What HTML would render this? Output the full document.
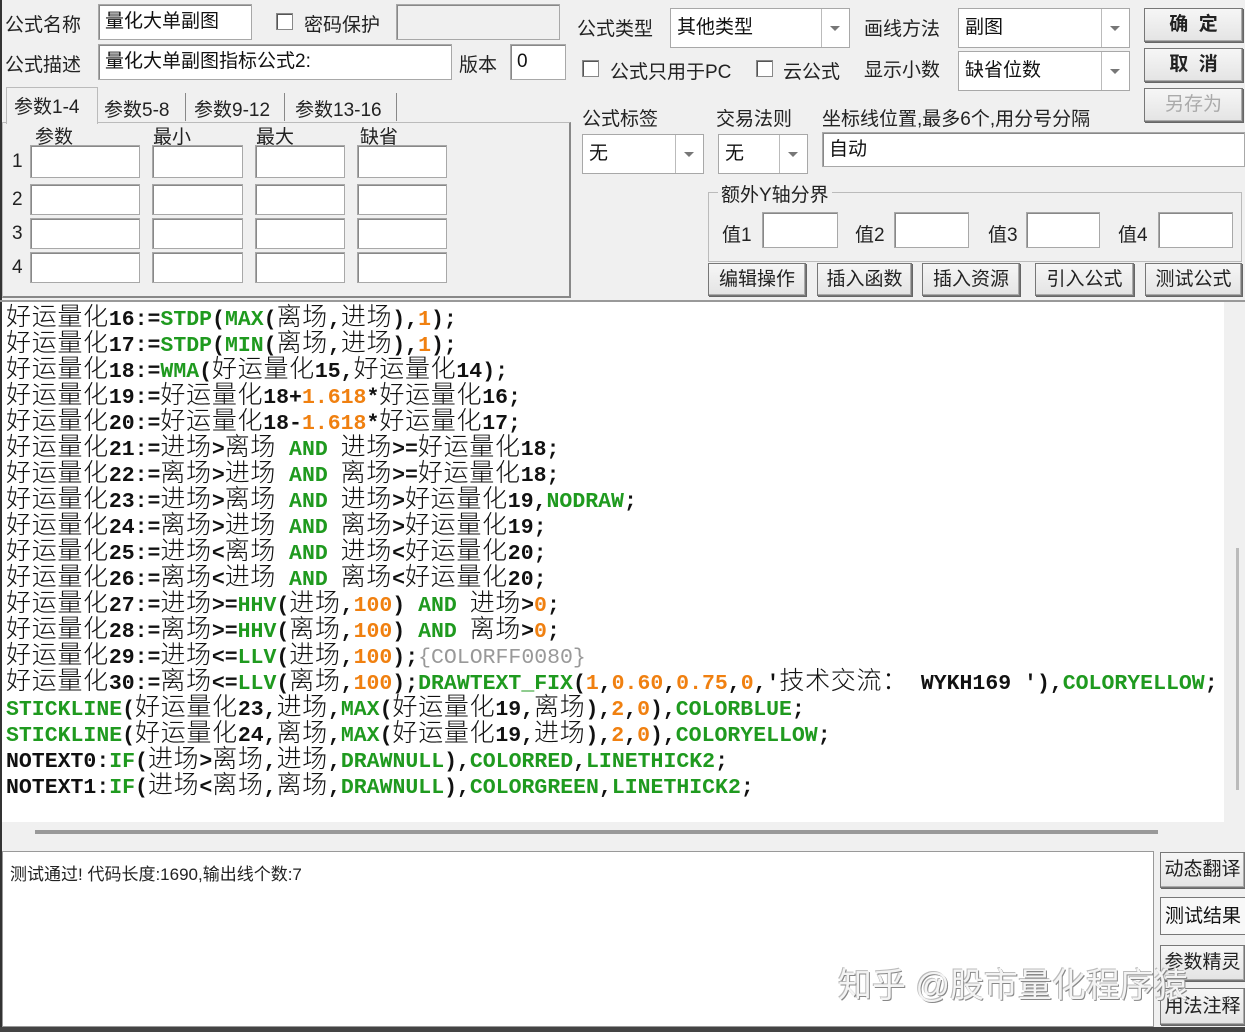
<!DOCTYPE html><html><head><meta charset="utf-8"><style>
*{box-sizing:border-box;margin:0;padding:0}
body{width:1245px;height:1032px;background:#f0f0f0;position:relative;overflow:hidden;font-family:"Liberation Sans","Noto Sans CJK SC",sans-serif;font-size:19px;color:#111}
.a{position:absolute}
.in{position:absolute;background:#fff;border:1px solid #a8a8a8;box-shadow:inset 1px 1px 0 #888;padding:2px 6px;white-space:nowrap;line-height:30px}
.lb{position:absolute;white-space:nowrap;color:#222}
.cb{position:absolute;width:17px;height:17px;background:#fff;border:1px solid #888;box-shadow:inset 1px 1px 0 #555}
.sel{position:absolute;background:#fff;border:1px solid #a8a8a8;padding:4px 6px;line-height:30px;white-space:nowrap}
.sel:after{content:"";position:absolute;right:0;top:0;bottom:0;width:27px;border-left:1px solid #bbb;background:#fff}
.sel:before{content:"";position:absolute;right:9px;top:50%;margin-top:-2px;border-left:5px solid transparent;border-right:5px solid transparent;border-top:5px solid #777;z-index:2}
.bt{position:absolute;background:linear-gradient(#f6f6f6,#e4e4e4);border:1px solid #777;box-shadow:inset -1px -1px 0 #aaa,1px 1px 0 #666;text-align:center;white-space:nowrap;color:#222}
#code{position:absolute;left:2px;top:302px;width:1222px;height:520px;background:#fff;font-family:"Liberation Mono",monospace;font-weight:bold;font-size:21.5px;line-height:26px;padding-left:4px;padding-top:0;color:#111}
#code div{height:26px;white-space:pre}
c{font-family:"Noto Sans CJK SC","WenQuanYi Zen Hei",sans-serif;font-weight:300;font-size:25px;letter-spacing:0.7px;line-height:26px}
g{color:#1f9a1f}o{color:#f08010}y{color:#999;font-weight:normal}
</style></head><body>
<div class="a" style="left:0;top:0;width:2px;height:1032px;background:#333"></div>
<div class="lb" style="left:5px;top:10px">公式名称</div>
<div class="in" style="left:98px;top:4px;width:154px;height:36px">量化大单副图</div>
<div class="cb" style="left:276px;top:13px"></div>
<div class="lb" style="left:304px;top:10px">密码保护</div>
<div class="in" style="left:396px;top:4px;width:164px;height:36px;background:#f0f0f0"></div>
<div class="lb" style="left:5px;top:50px">公式描述</div>
<div class="in" style="left:98px;top:44px;width:354px;height:36px">量化大单副图指标公式2:</div>
<div class="lb" style="left:459px;top:50px">版本</div>
<div class="in" style="left:510px;top:44px;width:56px;height:36px">0</div>
<div class="a" style="left:2px;top:122px;width:569px;height:176px;border:1px solid #bbb;border-right:2px solid #888;border-bottom:2px solid #888"></div>
<div class="a" style="left:6px;top:87px;width:92px;height:37px;border:1px solid #bbb;border-bottom:none;background:#f0f0f0"></div>
<div class="lb" style="left:14px;top:92px">参数1-4</div>
<div class="lb" style="left:104px;top:95px">参数5-8</div>
<div class="lb" style="left:194px;top:95px">参数9-12</div>
<div class="lb" style="left:295px;top:95px">参数13-16</div>
<div class="a" style="left:185px;top:93px;width:1px;height:28px;background:#888"></div>
<div class="a" style="left:284px;top:93px;width:1px;height:28px;background:#888"></div>
<div class="a" style="left:396px;top:93px;width:1px;height:28px;background:#888"></div>
<div class="lb" style="left:35px;top:122px">参数</div><div class="lb" style="left:153px;top:122px">最小</div><div class="lb" style="left:256px;top:122px">最大</div><div class="lb" style="left:360px;top:122px">缺省</div>
<div class="lb" style="left:12px;top:151px">1</div><div class="lb" style="left:12px;top:189px">2</div><div class="lb" style="left:12px;top:223px">3</div><div class="lb" style="left:12px;top:257px">4</div>
<div class="in" style="left:30px;top:145px;width:110px;height:33px"></div><div class="in" style="left:152px;top:145px;width:91px;height:33px"></div><div class="in" style="left:255px;top:145px;width:90px;height:33px"></div><div class="in" style="left:357px;top:145px;width:90px;height:33px"></div>
<div class="in" style="left:30px;top:184px;width:110px;height:31px"></div><div class="in" style="left:152px;top:184px;width:91px;height:31px"></div><div class="in" style="left:255px;top:184px;width:90px;height:31px"></div><div class="in" style="left:357px;top:184px;width:90px;height:31px"></div>
<div class="in" style="left:30px;top:218px;width:110px;height:31px"></div><div class="in" style="left:152px;top:218px;width:91px;height:31px"></div><div class="in" style="left:255px;top:218px;width:90px;height:31px"></div><div class="in" style="left:357px;top:218px;width:90px;height:31px"></div>
<div class="in" style="left:30px;top:252px;width:110px;height:31px"></div><div class="in" style="left:152px;top:252px;width:91px;height:31px"></div><div class="in" style="left:255px;top:252px;width:90px;height:31px"></div><div class="in" style="left:357px;top:252px;width:90px;height:31px"></div>

<div class="lb" style="left:577px;top:14px">公式类型</div>
<div class="sel" style="left:670px;top:8px;width:180px;height:40px">其他类型</div>
<div class="lb" style="left:864px;top:14px">画线方法</div>
<div class="sel" style="left:958px;top:8px;width:172px;height:40px">副图</div>
<div class="bt" style="left:1144px;top:8px;width:99px;height:34px;line-height:32px;font-weight:bold">确&nbsp;&nbsp;定</div>
<div class="cb" style="left:582px;top:60px"></div>
<div class="lb" style="left:610px;top:57px">公式只用于PC</div>
<div class="cb" style="left:756px;top:60px"></div>
<div class="lb" style="left:783px;top:57px">云公式</div>
<div class="lb" style="left:864px;top:55px">显示小数</div>
<div class="sel" style="left:958px;top:51px;width:172px;height:40px">缺省位数</div>
<div class="bt" style="left:1144px;top:48px;width:99px;height:34px;line-height:32px;font-weight:bold">取&nbsp;&nbsp;消</div>
<div class="bt" style="left:1144px;top:88px;width:99px;height:34px;line-height:32px;color:#aaa">另存为</div>
<div class="lb" style="left:582px;top:104px">公式标签</div>
<div class="lb" style="left:716px;top:104px">交易法则</div>
<div class="lb" style="left:822px;top:104px">坐标线位置,最多6个,用分号分隔</div>
<div class="sel" style="left:582px;top:134px;width:122px;height:40px">无</div>
<div class="sel" style="left:718px;top:134px;width:90px;height:40px">无</div>
<div class="in" style="left:822px;top:132px;width:423px;height:35px">自动</div>
<div class="a" style="left:708px;top:192px;width:534px;height:70px;border:1px solid #bbb"></div>
<div class="lb" style="left:718px;top:180px;background:#f0f0f0;padding:0 3px">额外Y轴分界</div>
<div class="lb" style="left:722px;top:220px">值1</div><div class="in" style="left:762px;top:212px;width:76px;height:36px"></div>
<div class="lb" style="left:855px;top:220px">值2</div><div class="in" style="left:894px;top:212px;width:75px;height:36px"></div>
<div class="lb" style="left:988px;top:220px">值3</div><div class="in" style="left:1026px;top:212px;width:74px;height:36px"></div>
<div class="lb" style="left:1118px;top:220px">值4</div><div class="in" style="left:1158px;top:212px;width:75px;height:36px"></div>
<div class="bt" style="left:708px;top:263px;width:98px;height:33px;line-height:31px">编辑操作</div>
<div class="bt" style="left:817px;top:263px;width:95px;height:33px;line-height:31px">插入函数</div>
<div class="bt" style="left:922px;top:263px;width:98px;height:33px;line-height:31px">插入资源</div>
<div class="bt" style="left:1035px;top:263px;width:99px;height:33px;line-height:31px">引入公式</div>
<div class="bt" style="left:1145px;top:263px;width:97px;height:33px;line-height:31px">测试公式</div>

<div class="a" style="left:0;top:300px;width:1245px;height:2px;background:#999"></div>
<div id="code">
<div><c>好运量化</c>16:=<g>STDP</g>(<g>MAX</g>(<c>离场</c>,<c>进场</c>),<o>1</o>);</div>
<div><c>好运量化</c>17:=<g>STDP</g>(<g>MIN</g>(<c>离场</c>,<c>进场</c>),<o>1</o>);</div>
<div><c>好运量化</c>18:=<g>WMA</g>(<c>好运量化</c>15,<c>好运量化</c>14);</div>
<div><c>好运量化</c>19:=<c>好运量化</c>18+<o>1.618</o>*<c>好运量化</c>16;</div>
<div><c>好运量化</c>20:=<c>好运量化</c>18-<o>1.618</o>*<c>好运量化</c>17;</div>
<div><c>好运量化</c>21:=<c>进场</c>&gt;<c>离场</c> <g>AND</g> <c>进场</c>&gt;=<c>好运量化</c>18;</div>
<div><c>好运量化</c>22:=<c>离场</c>&gt;<c>进场</c> <g>AND</g> <c>离场</c>&gt;=<c>好运量化</c>18;</div>
<div><c>好运量化</c>23:=<c>进场</c>&gt;<c>离场</c> <g>AND</g> <c>进场</c>&gt;<c>好运量化</c>19,<g>NODRAW</g>;</div>
<div><c>好运量化</c>24:=<c>离场</c>&gt;<c>进场</c> <g>AND</g> <c>离场</c>&gt;<c>好运量化</c>19;</div>
<div><c>好运量化</c>25:=<c>进场</c>&lt;<c>离场</c> <g>AND</g> <c>进场</c>&lt;<c>好运量化</c>20;</div>
<div><c>好运量化</c>26:=<c>离场</c>&lt;<c>进场</c> <g>AND</g> <c>离场</c>&lt;<c>好运量化</c>20;</div>
<div><c>好运量化</c>27:=<c>进场</c>&gt;=<g>HHV</g>(<c>进场</c>,<o>100</o>) <g>AND</g> <c>进场</c>&gt;<o>0</o>;</div>
<div><c>好运量化</c>28:=<c>离场</c>&gt;=<g>HHV</g>(<c>离场</c>,<o>100</o>) <g>AND</g> <c>离场</c>&gt;<o>0</o>;</div>
<div><c>好运量化</c>29:=<c>进场</c>&lt;=<g>LLV</g>(<c>进场</c>,<o>100</o>);<y>{COLORFF0080}</y></div>
<div><c>好运量化</c>30:=<c>离场</c>&lt;=<g>LLV</g>(<c>离场</c>,<o>100</o>);<g>DRAWTEXT_FIX</g>(<o>1</o>,<o>0.60</o>,<o>0.75</o>,<o>0</o>,'<c>技术交流：</c> WYKH169 '),<g>COLORYELLOW</g>;</div>
<div><g>STICKLINE</g>(<c>好运量化</c>23,<c>进场</c>,<g>MAX</g>(<c>好运量化</c>19,<c>离场</c>),<o>2</o>,<o>0</o>),<g>COLORBLUE</g>;</div>
<div><g>STICKLINE</g>(<c>好运量化</c>24,<c>离场</c>,<g>MAX</g>(<c>好运量化</c>19,<c>进场</c>),<o>2</o>,<o>0</o>),<g>COLORYELLOW</g>;</div>
<div>NOTEXT0:<g>IF</g>(<c>进场</c>&gt;<c>离场</c>,<c>进场</c>,<g>DRAWNULL</g>),<g>COLORRED</g>,<g>LINETHICK2</g>;</div>
<div>NOTEXT1:<g>IF</g>(<c>进场</c>&lt;<c>离场</c>,<c>离场</c>,<g>DRAWNULL</g>),<g>COLORGREEN</g>,<g>LINETHICK2</g>;</div>
</div>
<div class="a" style="left:1236px;top:548px;width:3px;height:242px;background:#bbb"></div>
<div class="a" style="left:35px;top:830px;width:1123px;height:4px;background:#999"></div>
<div class="a" style="left:2px;top:851px;width:1152px;height:176px;background:#fff;border:1px solid #999"></div>
<div class="lb" style="left:10px;top:860px;font-size:17px">测试通过! 代码长度:1690,输出线个数:7</div>
<div class="bt" style="left:1160px;top:852px;width:85px;height:36px;line-height:34px">动态翻译</div>
<div class="a" style="left:1160px;top:897px;width:85px;height:38px;line-height:38px;background:#f8f8f8;border:1px solid #777;border-right:none;text-align:center">测试结果</div>
<div class="bt" style="left:1160px;top:945px;width:85px;height:36px;line-height:34px">参数精灵</div>
<div class="bt" style="left:1160px;top:988px;width:85px;height:37px;line-height:35px">用法注释</div>
<div class="lb" style="left:838px;top:958px;font-size:34px;color:#f4f4f4;text-shadow:1px 1px 0 #888,-1px -1px 0 #bbb">知乎 @股市量化程序猿</div>
<div class="a" style="left:0;top:1027px;width:1245px;height:5px;background:#444"></div>
</body></html>
